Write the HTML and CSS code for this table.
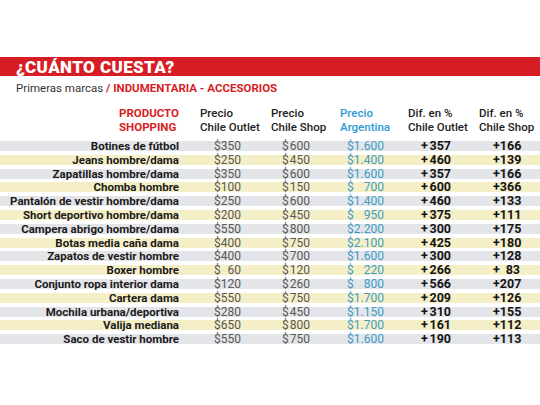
FILE: index.html
```html
<!DOCTYPE html>
<html lang="es">
<head>
    <meta charset="UTF-8">
    <title>¿Cuánto cuesta?</title>
    <link rel="stylesheet" href="styles.css">
</head>
<body>
    <div class="sheet">
        <h2 class="bar">¿CUÁNTO CUESTA?</h2>
        <p class="sub">Primeras marcas <strong>/ INDUMENTARIA - ACCESORIOS</strong></p>

        <div class="head">
            <div class="h1 red">PRODUCTO<br>SHOPPING</div>
            <div class="h2">Precio<br>Chile Outlet</div>
            <div class="h3">Precio<br>Chile Shop</div>
            <div class="h4 blue">Precio<br>Argentina</div>
            <div class="h5">Dif. en %<br>Chile Outlet</div>
            <div class="h6">Dif. en %<br>Chile Shop</div>
        </div>

        <div class="rows">
            <div class="row"><div class="name">Botines de fútbol</div><span class="v c2">$<span>350</span></span><span class="v c3">$<span>600</span></span><span class="v c4">$<span>1.600</span></span><span class="d c5">+<span>357</span></span><span class="d c6">+<span>166</span></span></div>
            <div class="row"><div class="name">Jeans hombre/dama</div><span class="v c2">$<span>250</span></span><span class="v c3">$<span>450</span></span><span class="v c4">$<span>1.400</span></span><span class="d c5">+<span>460</span></span><span class="d c6">+<span>139</span></span></div>
            <div class="row"><div class="name">Zapatillas hombre/dama</div><span class="v c2">$<span>350</span></span><span class="v c3">$<span>600</span></span><span class="v c4">$<span>1.600</span></span><span class="d c5">+<span>357</span></span><span class="d c6">+<span>166</span></span></div>
            <div class="row"><div class="name">Chomba hombre</div><span class="v c2">$<span>100</span></span><span class="v c3">$<span>150</span></span><span class="v c4">$<span>700</span></span><span class="d c5">+<span>600</span></span><span class="d c6">+<span>366</span></span></div>
            <div class="row"><div class="name">Pantalón de vestir hombre/dama</div><span class="v c2">$<span>250</span></span><span class="v c3">$<span>600</span></span><span class="v c4">$<span>1.400</span></span><span class="d c5">+<span>460</span></span><span class="d c6">+<span>133</span></span></div>
            <div class="row"><div class="name">Short deportivo hombre/dama</div><span class="v c2">$<span>200</span></span><span class="v c3">$<span>450</span></span><span class="v c4">$<span>950</span></span><span class="d c5">+<span>375</span></span><span class="d c6">+<span>111</span></span></div>
            <div class="row"><div class="name">Campera abrigo hombre/dama</div><span class="v c2">$<span>550</span></span><span class="v c3">$<span>800</span></span><span class="v c4">$<span>2.200</span></span><span class="d c5">+<span>300</span></span><span class="d c6">+<span>175</span></span></div>
            <div class="row"><div class="name">Botas media caña dama</div><span class="v c2">$<span>400</span></span><span class="v c3">$<span>750</span></span><span class="v c4">$<span>2.100</span></span><span class="d c5">+<span>425</span></span><span class="d c6">+<span>180</span></span></div>
            <div class="row"><div class="name">Zapatos de vestir hombre</div><span class="v c2">$<span>400</span></span><span class="v c3">$<span>700</span></span><span class="v c4">$<span>1.600</span></span><span class="d c5">+<span>300</span></span><span class="d c6">+<span>128</span></span></div>
            <div class="row"><div class="name">Boxer hombre</div><span class="v c2">$<span>60</span></span><span class="v c3">$<span>120</span></span><span class="v c4">$<span>220</span></span><span class="d c5">+<span>266</span></span><span class="d c6">+<span>83</span></span></div>
            <div class="row"><div class="name">Conjunto ropa interior dama</div><span class="v c2">$<span>120</span></span><span class="v c3">$<span>260</span></span><span class="v c4">$<span>800</span></span><span class="d c5">+<span>566</span></span><span class="d c6">+<span>207</span></span></div>
            <div class="row"><div class="name">Cartera dama</div><span class="v c2">$<span>550</span></span><span class="v c3">$<span>750</span></span><span class="v c4">$<span>1.700</span></span><span class="d c5">+<span>209</span></span><span class="d c6">+<span>126</span></span></div>
            <div class="row"><div class="name">Mochila urbana/deportiva</div><span class="v c2">$<span>280</span></span><span class="v c3">$<span>450</span></span><span class="v c4">$<span>1.150</span></span><span class="d c5">+<span>310</span></span><span class="d c6">+<span>155</span></span></div>
            <div class="row"><div class="name">Valija mediana</div><span class="v c2">$<span>650</span></span><span class="v c3">$<span>800</span></span><span class="v c4">$<span>1.700</span></span><span class="d c5">+<span>161</span></span><span class="d c6">+<span>112</span></span></div>
            <div class="row"><div class="name">Saco de vestir hombre</div><span class="v c2">$<span>550</span></span><span class="v c3">$<span>750</span></span><span class="v c4">$<span>1.600</span></span><span class="d c5">+<span>190</span></span><span class="d c6">+<span>113</span></span></div>
        </div>
    </div>
</body>
</html>
```

FILE: styles.css
```css
:root {
    --red: #d71d24;
    --blue: #2a9ad4;
    --grey-row: #e3e5e9;
    --yellow-row: #f5efc8;
    --cols: 190px 70px 70px 68px 72px 70px;
}

html,
body {
    padding: 0;
    margin: 0;
    background: #fff;
}

.sheet {
    width: 540px;
    padding-top: 57px;
    font-family: Roboto, "Liberation Sans", sans-serif;
    color: #1b1b1b;
}

.bar {
    margin: 0;
    height: 19px;
    padding-left: 16px;
    background: var(--red);
    color: #fff;
    font-size: 17px;
    font-weight: 900;
    line-height: 21px;
    letter-spacing: 0.4px;
}

.sub {
    margin: 5px 0 0 16px;
    font-size: 11.5px;
    line-height: 14px;
    color: #333;
}

.sub strong {
    color: var(--red);
    font-weight: 700;
}

.head {
    display: grid;
    grid-template-columns: var(--cols);
    margin-top: 11px;
    font-size: 11.5px;
    font-weight: 500;
    line-height: 14px;
    color: #222;
}

.red {
    color: var(--red);
    font-weight: 700;
}

.blue {
    color: var(--blue);
}

.h1 { padding-left: 119px; }
.h2 { padding-left: 10px; }
.h3 { padding-left: 11px; }
.h4 { padding-left: 10px; }
.h5 { padding-left: 10px; }
.h6 { padding-left: 9px; }

.rows {
    display: grid;
    row-gap: 3.8px;
    margin-top: 7px;
}

.row {
    display: grid;
    grid-template-columns: var(--cols);
    align-items: center;
    height: 10px;
    font-size: 11.5px;
    line-height: 10px;
    background: var(--grey-row);
}

.row:nth-child(even) {
    background: var(--yellow-row);
}

.name {
    text-align: right;
    padding-right: 11px;
    font-weight: 700;
    white-space: nowrap;
}

.v,
.d {
    display: flex;
    justify-content: space-between;
}

.v {
    font-size: 12px;
    font-weight: 400;
    color: #585858;
}

.d {
    font-size: 12.5px;
    font-weight: 700;
    color: #151515;
}

.c2 { margin-left: 24px; width: 27px; }
.c3 { margin-left: 22px; width: 28px; }
.c4 { margin-left: 17px; width: 37px; color: #3d9cc6; }
.c5 { margin-left: 23px; width: 30px; }
.c6 { margin-left: 23px; width: 27px; }
```
